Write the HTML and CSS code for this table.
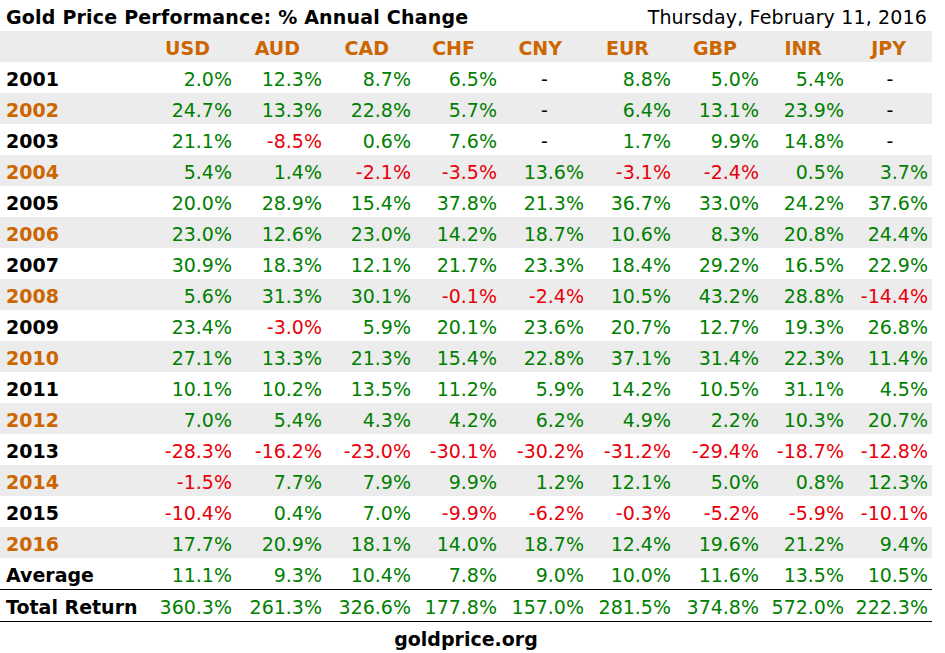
FILE: index.html
```html
<!DOCTYPE html>
<html lang="en">
<head>
<meta charset="utf-8">
<title>Gold Price Performance</title>
<link rel="stylesheet" href="styles.css">
</head>
<body>
<div class="page">
  <div class="titlebar">
    <span class="title">Gold Price Performance: % Annual Change</span>
    <span class="date">Thursday, February 11, 2016</span>
  </div>
  <table class="perf">
    <colgroup>
      <col class="c-year"><col class="c-usd"><col class="c-aud"><col class="c-cad"><col class="c-chf"><col class="c-cny"><col class="c-eur"><col class="c-gbp"><col class="c-inr"><col class="c-jpy">
    </colgroup>
    <thead>
      <tr><th></th><th>USD</th><th>AUD</th><th>CAD</th><th>CHF</th><th>CNY</th><th>EUR</th><th>GBP</th><th>INR</th><th>JPY</th></tr>
    </thead>
    <tbody>
      <tr><th>2001</th><td class="p">2.0%</td><td class="p">12.3%</td><td class="p">8.7%</td><td class="p">6.5%</td><td class="nil">-</td><td class="p">8.8%</td><td class="p">5.0%</td><td class="p">5.4%</td><td class="nil">-</td></tr>
      <tr><th>2002</th><td class="p">24.7%</td><td class="p">13.3%</td><td class="p">22.8%</td><td class="p">5.7%</td><td class="nil">-</td><td class="p">6.4%</td><td class="p">13.1%</td><td class="p">23.9%</td><td class="nil">-</td></tr>
      <tr><th>2003</th><td class="p">21.1%</td><td class="n">-8.5%</td><td class="p">0.6%</td><td class="p">7.6%</td><td class="nil">-</td><td class="p">1.7%</td><td class="p">9.9%</td><td class="p">14.8%</td><td class="nil">-</td></tr>
      <tr><th>2004</th><td class="p">5.4%</td><td class="p">1.4%</td><td class="n">-2.1%</td><td class="n">-3.5%</td><td class="p">13.6%</td><td class="n">-3.1%</td><td class="n">-2.4%</td><td class="p">0.5%</td><td class="p">3.7%</td></tr>
      <tr><th>2005</th><td class="p">20.0%</td><td class="p">28.9%</td><td class="p">15.4%</td><td class="p">37.8%</td><td class="p">21.3%</td><td class="p">36.7%</td><td class="p">33.0%</td><td class="p">24.2%</td><td class="p">37.6%</td></tr>
      <tr><th>2006</th><td class="p">23.0%</td><td class="p">12.6%</td><td class="p">23.0%</td><td class="p">14.2%</td><td class="p">18.7%</td><td class="p">10.6%</td><td class="p">8.3%</td><td class="p">20.8%</td><td class="p">24.4%</td></tr>
      <tr><th>2007</th><td class="p">30.9%</td><td class="p">18.3%</td><td class="p">12.1%</td><td class="p">21.7%</td><td class="p">23.3%</td><td class="p">18.4%</td><td class="p">29.2%</td><td class="p">16.5%</td><td class="p">22.9%</td></tr>
      <tr><th>2008</th><td class="p">5.6%</td><td class="p">31.3%</td><td class="p">30.1%</td><td class="n">-0.1%</td><td class="n">-2.4%</td><td class="p">10.5%</td><td class="p">43.2%</td><td class="p">28.8%</td><td class="n">-14.4%</td></tr>
      <tr><th>2009</th><td class="p">23.4%</td><td class="n">-3.0%</td><td class="p">5.9%</td><td class="p">20.1%</td><td class="p">23.6%</td><td class="p">20.7%</td><td class="p">12.7%</td><td class="p">19.3%</td><td class="p">26.8%</td></tr>
      <tr><th>2010</th><td class="p">27.1%</td><td class="p">13.3%</td><td class="p">21.3%</td><td class="p">15.4%</td><td class="p">22.8%</td><td class="p">37.1%</td><td class="p">31.4%</td><td class="p">22.3%</td><td class="p">11.4%</td></tr>
      <tr><th>2011</th><td class="p">10.1%</td><td class="p">10.2%</td><td class="p">13.5%</td><td class="p">11.2%</td><td class="p">5.9%</td><td class="p">14.2%</td><td class="p">10.5%</td><td class="p">31.1%</td><td class="p">4.5%</td></tr>
      <tr><th>2012</th><td class="p">7.0%</td><td class="p">5.4%</td><td class="p">4.3%</td><td class="p">4.2%</td><td class="p">6.2%</td><td class="p">4.9%</td><td class="p">2.2%</td><td class="p">10.3%</td><td class="p">20.7%</td></tr>
      <tr><th>2013</th><td class="n">-28.3%</td><td class="n">-16.2%</td><td class="n">-23.0%</td><td class="n">-30.1%</td><td class="n">-30.2%</td><td class="n">-31.2%</td><td class="n">-29.4%</td><td class="n">-18.7%</td><td class="n">-12.8%</td></tr>
      <tr><th>2014</th><td class="n">-1.5%</td><td class="p">7.7%</td><td class="p">7.9%</td><td class="p">9.9%</td><td class="p">1.2%</td><td class="p">12.1%</td><td class="p">5.0%</td><td class="p">0.8%</td><td class="p">12.3%</td></tr>
      <tr><th>2015</th><td class="n">-10.4%</td><td class="p">0.4%</td><td class="p">7.0%</td><td class="n">-9.9%</td><td class="n">-6.2%</td><td class="n">-0.3%</td><td class="n">-5.2%</td><td class="n">-5.9%</td><td class="n">-10.1%</td></tr>
      <tr><th>2016</th><td class="p">17.7%</td><td class="p">20.9%</td><td class="p">18.1%</td><td class="p">14.0%</td><td class="p">18.7%</td><td class="p">12.4%</td><td class="p">19.6%</td><td class="p">21.2%</td><td class="p">9.4%</td></tr>
    </tbody>
    <tfoot>
      <tr class="avg"><th>Average</th><td class="p">11.1%</td><td class="p">9.3%</td><td class="p">10.4%</td><td class="p">7.8%</td><td class="p">9.0%</td><td class="p">10.0%</td><td class="p">11.6%</td><td class="p">13.5%</td><td class="p">10.5%</td></tr>
      <tr class="total"><th>Total Return</th><td class="p">360.3%</td><td class="p">261.3%</td><td class="p">326.6%</td><td class="p">177.8%</td><td class="p">157.0%</td><td class="p">281.5%</td><td class="p">374.8%</td><td class="p">572.0%</td><td class="p">222.3%</td></tr>
    </tfoot>
  </table>
  <div class="source">goldprice.org</div>
</div>
</body>
</html>
```
FILE: styles.css
```css
html, body {
  margin: 0;
  padding: 0;
  background: #ffffff;
}

body {
  font-family: "DejaVu Sans", Verdana, sans-serif;
  font-size: 19px;
  color: #000000;
}

.page {
  width: 932px;
}

.titlebar {
  display: flex;
  justify-content: space-between;
  align-items: flex-start;
  height: 31px;
  line-height: 27px;
  padding-top: 4px;
  box-sizing: border-box;
}

.title {
  font-weight: bold;
  padding-left: 6px;
  letter-spacing: 0.2px;
}

.date {
  padding-right: 5px;
  letter-spacing: 0.15px;
}

.perf {
  width: 932px;
  table-layout: fixed;
  border-collapse: collapse;
  border-spacing: 0;
}

.c-year { width: 146px; }
.c-usd { width: 90px; }
.c-aud { width: 90px; }
.c-cad { width: 89px; }
.c-chf { width: 86px; }
.c-cny { width: 87px; }
.c-eur { width: 87px; }
.c-gbp { width: 88px; }
.c-inr { width: 85px; }
.c-jpy { width: 84px; }

.perf th,
.perf td {
  padding: 4px 4px 0 0;
  line-height: 27px;
  white-space: nowrap;
  vertical-align: top;
}

.perf thead tr {
  background: #ececec;
}

.perf thead th {
  font-weight: bold;
  color: #cc6600;
  text-align: right;
  padding-right: 26px;
}

.perf tbody th,
.perf tfoot th {
  text-align: left;
  font-weight: bold;
  padding-left: 6px;
  color: #000000;
}

.perf tbody tr:nth-child(even) {
  background: #ececec;
}

.perf tbody tr:nth-child(even) th {
  color: #cc6600;
}

.perf td {
  text-align: right;
}

.perf td.p {
  color: #008000;
}

.perf td.n {
  color: #e8000b;
}

.perf td.nil {
  text-align: center;
  padding-right: 0;
  color: #000000;
}

.perf tr.total th,
.perf tr.total td {
  border-top: 1px solid #000000;
  border-bottom: 1px solid #000000;
}

.source {
  width: 932px;
  text-align: center;
  font-weight: bold;
  line-height: 27px;
  padding-top: 4px;
}
```
